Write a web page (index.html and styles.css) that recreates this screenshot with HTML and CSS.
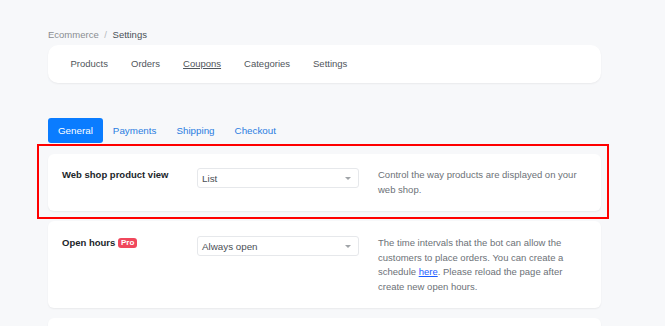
FILE: index.html
```html
<!DOCTYPE html>
<html lang="en">
	<head>
		<meta charset="utf-8">
		<title>Ecommerce Settings</title>
		<link rel="stylesheet" href="styles.css">
	</head>
	<body>
		<div id="page">

			<div class="breadcrumb">
				<span class="crumb">Ecommerce</span>
				<span class="sep">/</span>
				<span class="current">Settings</span>
			</div>

			<div class="navCard">
				<a class="navItem">Products</a>
				<a class="navItem">Orders</a>
				<a class="navItem active">Coupons</a>
				<a class="navItem">Categories</a>
				<a class="navItem">Settings</a>
			</div>

			<div class="tabs">
				<div class="tab active">General</div>
				<div class="tab">Payments</div>
				<div class="tab">Shipping</div>
				<div class="tab">Checkout</div>
			</div>

			<div class="highlightWrap">
				<div class="highlight"></div>
				<div class="setting">
					<div class="label">Web shop product view</div>
					<div class="select">
						<span>List</span>
						<span class="caret"></span>
					</div>
					<div class="desc">Control the way products are displayed on your web shop.</div>
				</div>
			</div>

			<div class="setting">
				<div class="label">Open hours <span class="pro">Pro</span></div>
				<div class="select">
					<span>Always open</span>
					<span class="caret"></span>
				</div>
				<div class="desc">The time intervals that the bot can allow the customers to place orders. You can create a schedule <a class="link">here</a>. Please reload the page after create new open hours.</div>
			</div>

			<div class="setting last"></div>

		</div>
	</body>
</html>
```

FILE: styles.css
```css
body{
	margin: 0;
	padding: 0;
	background-color: #f7f8fa;
	font-family: "Liberation Sans", Arial, sans-serif;
	font-size: 9.5px;
	overflow: hidden;
}

#page{
	width: 553px;
	padding: 28px 0 0 48px;
}

.breadcrumb{
	line-height: 14px;
	color: #8a8d91;
}

.breadcrumb .sep{
	color: #b5b8bc;
	margin: 0 3px;
}

.breadcrumb .current{
	color: #495057;
}

.navCard{
	display: flex;
	align-items: center;
	height: 38px;
	margin-top: 3px;
	padding: 0 11px;
	background-color: #fff;
	border-radius: 10px;
	box-shadow: 0 1px 2px rgba(0,0,0,0.06);
}

.navItem{
	padding: 0 11.5px 2px;
	color: #50555b;
}

.navItem.active{
	text-decoration: underline;
}

.tabs{
	display: flex;
	margin-top: 35px;
}

.tab{
	padding: 0 10px;
	line-height: 25px;
	font-size: 9.8px;
	color: #2a7de1;
	border-radius: 3px;
}

.tab.active{
	background-color: #0a7cff;
	color: #fff;
}

.highlightWrap{
	position: relative;
	margin-top: 11px;
}

.highlight{
	position: absolute;
	left: -11px;
	right: -8px;
	top: -10px;
	bottom: -8px;
	border: 2px solid #ff0000;
	pointer-events: none;
}

.setting{
	display: grid;
	grid-template-columns: 116px 162px 1fr;
	column-gap: 19px;
	align-items: start;
	padding: 14px;
	margin-bottom: 10px;
	background-color: #fff;
	border-radius: 6px;
	box-shadow: 0 1px 2px rgba(0,0,0,0.06);
}

.highlightWrap .setting{
	margin-bottom: 0;
}

.highlightWrap + .setting{
	margin-top: 10px;
	padding-top: 15px;
}

.label{
	font-weight: bold;
	color: #212529;
	line-height: 14px;
	white-space: nowrap;
}

.pro{
	display: inline-block;
	padding: 0 3px;
	line-height: 10px;
	font-size: 8px;
	color: #fff;
	background-color: #f0475c;
	border-radius: 3px;
	vertical-align: 1px;
}

.select{
	display: flex;
	align-items: center;
	justify-content: space-between;
	height: 18px;
	padding: 0 7px 0 4px;
	border: 1px solid #e6e8eb;
	border-radius: 3px;
	color: #4a4f55;
	font-size: 9.8px;
}

.caret{
	width: 0;
	height: 0;
	border-left: 3px solid transparent;
	border-right: 3px solid transparent;
	border-top: 3px solid #a0a4a8;
}

.desc{
	color: #6c7177;
	line-height: 14.5px;
}

.link{
	color: #1a5cff;
	text-decoration: underline;
}

.setting.last{
	height: 20px;
	margin-top: 1px;
	padding: 0;
}
```
